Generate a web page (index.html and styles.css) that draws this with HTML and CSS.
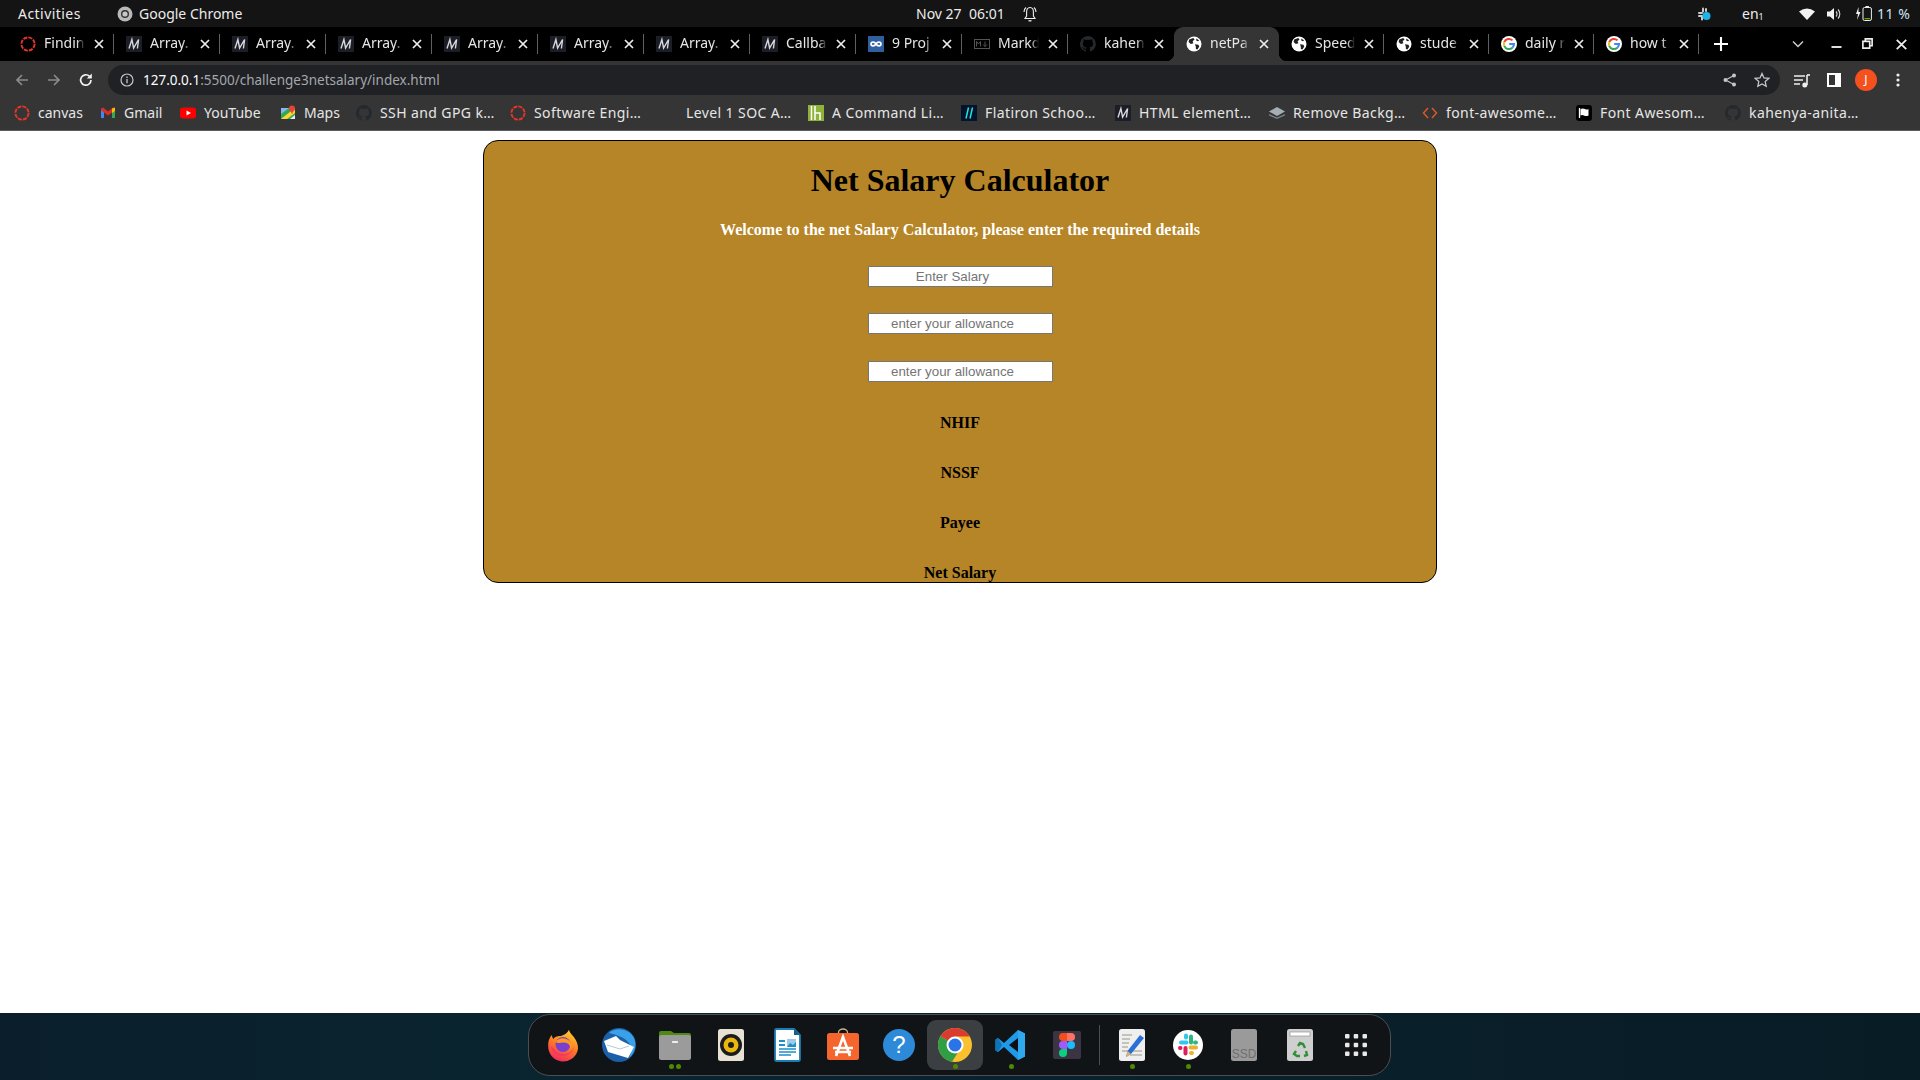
FILE: index.html
```html
<!DOCTYPE html>
<html lang="en">
<head>
<meta charset="utf-8">
<title>netPay</title>
<link rel="stylesheet" href="styles.css">
</head>
<body>
<svg class="defs" width="0" height="0" aria-hidden="true">
  <symbol id="ring" viewBox="0 0 16 16"><circle cx="8" cy="8" r="6.6" fill="none" stroke="#e5352b" stroke-width="1.9" stroke-dasharray="4.2 1"/></symbol>
  <symbol id="mdn" viewBox="0 0 16 16"><rect width="16" height="16" fill="#1b1e27"/><path d="M3 12.500 5.900 3.500 7.600 12 12.600 3.500 11.400 12.500" fill="none" stroke="#d8d8dc" stroke-width="1.400"/></symbol>
  <symbol id="globe" viewBox="0 0 16 16"><circle cx="8" cy="8" r="7.5" fill="#fff"/><path d="M3.2 3.4 7.2 1.9 8.6 3.6 6.6 5.2 7.4 7.3 4.8 8 2.6 6ZM9 8.2l3.4.5.9 1.7-1.8 3L9.900 13 9.800 10.800ZM10.300 2.400l2.900 2-1.300.9-1.700-.9Z" fill="#202124"/></symbol>
  <symbol id="google" viewBox="0 0 16 16"><circle cx="8" cy="8" r="8" fill="#fff"/><path d="M3.2 6.3A5 5 0 0 1 11.500 4.400" fill="none" stroke="#ea4335" stroke-width="2"/><path d="M3.200 9.700A5 5 0 0 1 3.200 6.300" fill="none" stroke="#fbbc05" stroke-width="2"/><path d="M11.400 11.700A5 5 0 0 1 3.200 9.700" fill="none" stroke="#34a853" stroke-width="2"/><path d="M8.200 8H13A5 5 0 0 1 11.400 11.700" fill="none" stroke="#4285f4" stroke-width="2"/></symbol>
  <symbol id="github" viewBox="0 0 16 16"><path d="M8 0a8 8 0 0 0-2.500 15.600c.4.100.5-.2.500-.4v-1.400c-2.200.5-2.700-1-2.700-1-.4-.9-.9-1.200-.9-1.200-.7-.5.100-.5.100-.5.800.1 1.200.8 1.200.8.700 1.200 1.900.9 2.300.7.100-.5.300-.9.500-1.100-1.800-.2-3.600-.9-3.600-4 0-.9.300-1.600.8-2.100-.1-.2-.4-1 .1-2.100 0 0 .7-.2 2.200.8a7.700 7.700 0 0 1 4 0c1.500-1 2.200-.8 2.200-.8.400 1.100.2 1.900.1 2.100.5.600.8 1.300.8 2.100 0 3.100-1.900 3.700-3.700 3.900.3.300.6.800.6 1.500v2.200c0 .2.100.5.600.4A8 8 0 0 0 8 0Z" fill="#24292e"/></symbol>
  <symbol id="close" viewBox="0 0 12 12"><path d="M2 2l8 8M10 2l-8 8" stroke="#eee" stroke-width="1.700" fill="none"/></symbol>
</svg>

<div class="topbar">
  <span class="activities">Activities</span>
  <span class="app-name">
    <svg class="ic16" viewBox="0 0 16 16"><circle cx="8" cy="8" r="7.500" fill="#b9b9b9"/><circle cx="8" cy="8" r="4" fill="#333"/><circle cx="8" cy="8" r="2.600" fill="#c8c8c8"/></svg>
    Google Chrome
  </span>
  <span class="clock">Nov 27&nbsp; 06:01</span>
  <svg class="bell" viewBox="0 0 14 16"><path d="M7 1.500C4.500 1.500 3.600 3.500 3.600 6v4L2 12.500h10L10.400 10V6C10.400 3.500 9.500 1.500 7 1.500ZM1 6Q1 3 3 1.500M13 6Q13 3 11 1.500" fill="none" stroke="#eee" stroke-width="1.100"/><path d="M5.500 14.800h3" stroke="#eee" stroke-width="1.300"/></svg>
  <div class="tray">
    <svg class="tray-slack" viewBox="0 0 14 14"><g fill="#ccc"><rect x="1" y="5" width="5" height="2" rx="1"/><rect x="5" y="0.500" width="2" height="5" rx="1"/><rect x="1" y="8" width="5" height="2" rx="1"/><rect x="4" y="9" width="2" height="4.500" rx="1"/><rect x="8" y="1" width="2" height="4" rx="1"/></g><circle cx="9.500" cy="9" r="4" fill="#1eb4e8"/></svg>
    <span class="lang">en<sub>1</sub></span>
    <svg class="tray-wifi" viewBox="0 0 16 12"><path d="M0 3.500Q8-2.500 16 3.500L8 12Z" fill="#f2f2f2"/></svg>
    <svg class="tray-vol" viewBox="0 0 15 14"><path d="M0 4.500h3L7 1v12L3 9.500H0Z" fill="#f2f2f2"/><path d="M9 4.500a3.500 3.500 0 0 1 0 5M11 2.500a6.500 6.500 0 0 1 0 9" fill="none" stroke="#ddd" stroke-width="1.100"/></svg>
    <svg class="tray-bat" viewBox="0 0 17 15"><path d="M3.500 1 1 8h2L2 14 5.500 6h-2Z" fill="#f2f2f2"/><rect x="8" y="1.500" width="8.400" height="13" rx="1.500" fill="none" stroke="#eee"/><rect x="10.500" y="0" width="3.400" height="1.500" fill="#eee"/><rect x="9.500" y="12" width="5.400" height="1.300" fill="#5fa800"/></svg>
    <span class="pct">11 %</span>
  </div>
</div>

<div class="tabstrip">
  <div class="tab"><svg class="ic16"><use href="#ring"/></svg><span class="tab-title">Findin</span><svg class="tab-x"><use href="#close"/></svg></div>
  <div class="tab"><svg class="ic16"><use href="#mdn"/></svg><span class="tab-title">Array.</span><svg class="tab-x"><use href="#close"/></svg></div>
  <div class="tab"><svg class="ic16"><use href="#mdn"/></svg><span class="tab-title">Array.</span><svg class="tab-x"><use href="#close"/></svg></div>
  <div class="tab"><svg class="ic16"><use href="#mdn"/></svg><span class="tab-title">Array.</span><svg class="tab-x"><use href="#close"/></svg></div>
  <div class="tab"><svg class="ic16"><use href="#mdn"/></svg><span class="tab-title">Array.</span><svg class="tab-x"><use href="#close"/></svg></div>
  <div class="tab"><svg class="ic16"><use href="#mdn"/></svg><span class="tab-title">Array.</span><svg class="tab-x"><use href="#close"/></svg></div>
  <div class="tab"><svg class="ic16"><use href="#mdn"/></svg><span class="tab-title">Array.</span><svg class="tab-x"><use href="#close"/></svg></div>
  <div class="tab"><svg class="ic16"><use href="#mdn"/></svg><span class="tab-title">Callba</span><svg class="tab-x"><use href="#close"/></svg></div>
  <div class="tab"><svg class="ic16" viewBox="0 0 16 16"><rect width="16" height="16" fill="#2f5f9e"/><path d="M8 8C6.500 5.500 3 5.600 3 8s3.500 2.500 5 0 5-2.400 5 0-3.500 2.500-5 0Z" fill="none" stroke="#fff" stroke-width="1.600"/></svg><span class="tab-title">9 Proj</span><svg class="tab-x"><use href="#close"/></svg></div>
  <div class="tab"><svg class="ic16" viewBox="0 0 16 16"><rect x=".5" y="3.500" width="15" height="9" fill="none" stroke="#555"/><path d="M2.500 10.500v-5l2 2.500 2-2.500v5M11 5.500v5M9 8.500l2 2 2-2" fill="none" stroke="#555"/></svg><span class="tab-title">Markd</span><svg class="tab-x"><use href="#close"/></svg></div>
  <div class="tab tab-last"><svg class="ic16"><use href="#github"/></svg><span class="tab-title">kahen</span><svg class="tab-x"><use href="#close"/></svg></div>
  <div class="tab tab-active tab-sm"><svg class="ic16"><use href="#globe"/></svg><span class="tab-title">netPa</span><svg class="tab-x"><use href="#close"/></svg></div>
  <div class="tab tab-sm"><svg class="ic16"><use href="#globe"/></svg><span class="tab-title">Speed</span><svg class="tab-x"><use href="#close"/></svg></div>
  <div class="tab tab-sm"><svg class="ic16"><use href="#globe"/></svg><span class="tab-title">stude</span><svg class="tab-x"><use href="#close"/></svg></div>
  <div class="tab tab-sm"><svg class="ic16"><use href="#google"/></svg><span class="tab-title">daily r</span><svg class="tab-x"><use href="#close"/></svg></div>
  <div class="tab tab-sm"><svg class="ic16"><use href="#google"/></svg><span class="tab-title">how t</span><svg class="tab-x"><use href="#close"/></svg></div>
  <svg class="newtab" viewBox="0 0 12 12"><path d="M6 0v12M0 6h12" stroke="#fff" stroke-width="1.800"/></svg>
  <svg class="tab-chev" viewBox="0 0 12 8"><path d="M1 1.500l5 5 5-5" fill="none" stroke="#ccc" stroke-width="1.500"/></svg>
  <svg class="win-min" viewBox="0 0 10 2"><rect width="10" height="2" fill="#ddd"/></svg>
  <svg class="win-max" viewBox="0 0 10 10"><path d="M3 3V.800h6.200V7H7M.8 3h6.200v6.200H.8Z" fill="none" stroke="#eee" stroke-width="1.500"/></svg>
  <svg class="win-x" viewBox="0 0 10 10"><path d="M.7.700l8.600 8.600M9.300.700L.7 9.300" stroke="#eee" stroke-width="1.600"/></svg>
</div>

<div class="toolbar">
  <svg class="nav nav-back" viewBox="0 0 16 16"><path d="M14 8H3M8 3 3 8l5 5" fill="none" stroke="#8a8b8e" stroke-width="1.700"/></svg>
  <svg class="nav nav-fwd" viewBox="0 0 16 16"><path d="M2 8h11M8 3l5 5-5 5" fill="none" stroke="#8a8b8e" stroke-width="1.700"/></svg>
  <svg class="nav nav-reload" viewBox="0 0 16 16"><path d="M13 8a5.200 5.200 0 1 1-1.500-3.700" fill="none" stroke="#f1f3f4" stroke-width="1.700"/><path d="M13.800 1.500v5h-5Z" fill="#f1f3f4"/></svg>
  <div class="omnibox">
    <svg class="info" viewBox="0 0 14 14"><circle cx="7" cy="7" r="6" fill="none" stroke="#c4c7c9" stroke-width="1.200"/><path d="M7 6v4.300M7 3.500v1.400" stroke="#c4c7c9" stroke-width="1.300"/></svg>
    <span class="url"><span class="host">127.0.0.1</span>:5500/challenge3netsalary/index.html</span>
    <svg class="share" viewBox="0 0 14 14"><circle cx="11" cy="2.500" r="2" fill="#c4c7c9"/><circle cx="11" cy="11.500" r="2" fill="#c4c7c9"/><circle cx="2.500" cy="7" r="2" fill="#c4c7c9"/><path d="M11 2.500 2.500 7l8.500 4.500" fill="none" stroke="#c4c7c9" stroke-width="1.100"/></svg>
    <svg class="star" viewBox="0 0 16 16"><path d="M8 1.500l2 4.400 4.800.5-3.600 3.200 1 4.700L8 11.900l-4.200 2.400 1-4.700L1.200 6.400 6 5.900Z" fill="none" stroke="#c4c7c9" stroke-width="1.300"/></svg>
  </div>
  <svg class="tool tool-media" viewBox="0 0 16 14"><path d="M0 2h11M0 6h9M0 10h6" stroke="#eee" stroke-width="1.500"/><path d="M13 1v10" stroke="#eee" stroke-width="1.600"/><path d="M13 1h3" stroke="#eee" stroke-width="1.600"/><circle cx="10.800" cy="11" r="2.500" fill="#eee"/></svg>
  <svg class="tool tool-side" viewBox="0 0 14 14"><rect x="1" y="1" width="12" height="12" fill="#353535" stroke="#fff" stroke-width="2"/><rect x="8" y="1" width="5" height="12" fill="#fff"/></svg>
  <span class="avatar">J</span>
  <svg class="tool tool-more" viewBox="0 0 4 14"><circle cx="2" cy="2" r="1.600" fill="#eee"/><circle cx="2" cy="7" r="1.600" fill="#eee"/><circle cx="2" cy="12" r="1.600" fill="#eee"/></svg>
</div>

<div class="bookmarks">
  <div class="bm bm-canvas"><svg class="ic16"><use href="#ring"/></svg><span>canvas</span></div>
  <div class="bm bm-gmail"><svg class="ic16" viewBox="0 0 16 16"><path d="M1 3.500v9.500h3V7.500L8 10.500l4-3V13h3V3.500l-2-1-5 4-5-4Z" fill="#d93025"/><path d="M1 5v8h3V7.500Z" fill="#4285f4"/><path d="M15 5v8h-3V7.500Z" fill="#34a853"/><path d="M12 3.500l3-1V6l-3 2Z" fill="#fbbc05"/></svg><span>Gmail</span></div>
  <div class="bm bm-yt"><svg class="ic16" viewBox="0 0 16 16"><rect y="2.500" width="16" height="11" rx="3" fill="#f00"/><path d="M6.500 5.500v5L11 8Z" fill="#fff"/></svg><span>YouTube</span></div>
  <div class="bm bm-maps"><svg class="ic16" viewBox="0 0 16 16"><path d="M1 3h10l4 0v11H1Z" fill="#34a853"/><path d="M1 14 15 3v5L7 14Z" fill="#fdd835"/><path d="M10 14l5-4v4Z" fill="#e8eaed"/><path d="M1 3h8L1 9Z" fill="#8ab4f8"/><circle cx="12" cy="3.500" r="3" fill="#ea4335"/><path d="M10 5l2 4 2-4Z" fill="#ea4335"/></svg><span>Maps</span></div>
  <div class="bm bm-ssh"><svg class="ic16"><use href="#github"/></svg><span>SSH and GPG k…</span></div>
  <div class="bm bm-soft"><svg class="ic16"><use href="#ring"/></svg><span>Software Engi…</span></div>
  <div class="bm bm-soc"><svg class="ic16" viewBox="0 0 16 16"><path d="M13 2.500A7 7 0 0 0 3.500 12.500 7 7 0 0 1 13 2.500Z" fill="#4a4a4a"/></svg><span>Level 1 SOC A…</span></div>
  <div class="bm bm-cmd"><svg class="ic16" viewBox="0 0 16 16"><rect width="16" height="16" fill="#8fb339"/><path d="M3.500 1v14M7 1v14M7 8h5v7" fill="none" stroke="#fff" stroke-width="1.500"/></svg><span>A Command Li…</span></div>
  <div class="bm bm-flat"><svg class="ic16" viewBox="0 0 16 16"><rect width="16" height="16" fill="#04122b"/><path d="M5 13.500 7.500 2.500M9 13.500 11.500 2.500" stroke="#19e6e0" stroke-width="1.500"/></svg><span>Flatiron Schoo…</span></div>
  <div class="bm bm-html"><svg class="ic16"><use href="#mdn"/></svg><span>HTML element…</span></div>
  <div class="bm bm-remove"><svg class="ic16" viewBox="0 0 16 16"><path d="M0 9 8 12.500 16 9v1.500L8 14 0 10.500Z" fill="#78808a"/><path d="M0 6.500 8 2l8 4.500L8 11Z" fill="#a6adb5"/></svg><span>Remove Backg…</span></div>
  <div class="bm bm-fa"><svg class="ic16" viewBox="0 0 16 16"><path d="M6 3 1.500 8 6 13M10 3l4.500 5L10 13" fill="none" stroke="#d8592a" stroke-width="1.500"/></svg><span>font-awesome…</span></div>
  <div class="bm bm-fa2"><svg class="ic16" viewBox="0 0 16 16"><rect width="16" height="16" rx="3" fill="#000"/><path d="M3.500 3v10" stroke="#fff" stroke-width="1.300"/><path d="M4.500 4Q7 3 9 4t3.500 0v6.500Q10 11.500 8 10.500t-3.500 0Z" fill="#fff"/></svg><span>Font Awesom…</span></div>
  <div class="bm"><svg class="ic16"><use href="#github"/></svg><span>kahenya-anita…</span></div>
</div>

<main class="page">
  <section class="card">
    <h1 class="title">Net Salary Calculator</h1>
    <p class="welcome">Welcome to the net Salary Calculator, please enter the required details</p>
    <form class="fields">
      <input class="field" type="number" placeholder="Enter Salary">
      <input class="field" type="number" placeholder="enter your allowance">
      <input class="field" type="number" placeholder="enter your allowance">
    </form>
    <div class="results">
      <p class="result">NHIF</p>
      <p class="result">NSSF</p>
      <p class="result">Payee</p>
      <p class="result">Net Salary</p>
    </div>
  </section>
</main>

<footer class="desktop">
  <nav class="dock">
    <div class="app"><svg class="app-ic" viewBox="0 0 36 36"><defs><linearGradient id="ff" x1="0.700" y1="0" x2="0.300" y2="1"><stop offset="0" stop-color="#ffcf2a"/><stop offset=".5" stop-color="#ff7a26"/><stop offset="1" stop-color="#f0285f"/></linearGradient></defs><path d="M24 2.500c.5 4 4 5.500 6.500 10 2.500 4.500 3 8 2 11.500A15 15 0 0 1 3.200 19C3 14 5 9.500 7 8c0 2 .6 3.200 1.500 4C10 9 14 9 16 9c3-1 7-3 8-6.500Z" fill="url(#ff)"/><circle cx="18" cy="17.500" r="7.500" fill="#7a3fd1"/><path d="M10.500 15c3-4 9-5.500 14-1 3 3 2.500 7 1 9 .5-5-3-8-7.500-7.500-3 .3-5 1-7.500-.5Z" fill="#ff9a1f"/><path d="M6 19c1 8 7 11 13 10 5-1 9-4 10-9-2 5-6 7-10 7-5 0-9-3-13-8Z" fill="#f43b5c"/></svg></div>
    <div class="app"><svg class="app-ic" viewBox="0 0 36 36"><circle cx="18" cy="18" r="17" fill="#1c5fa8"/><path d="M8 6C14 0 28 1 33 11c3 7 1 15-5 20 3-6 3-12-1-16-4-5-11-7-19-9Z" fill="#3aa0e8"/><path d="M3 14 15 9 19 13 33 20 27 31 7 25Z" fill="#fff"/><path d="M6 18 19 22 28 19" fill="none" stroke="#b8c8d8" stroke-width="1"/></svg></div>
    <div class="app"><svg class="app-ic" viewBox="0 0 36 36"><path d="M2 6a2 2 0 0 1 2-2h10l3 2h15a2 2 0 0 1 2 2v6H2Z" fill="#4f8a10"/><rect x="2" y="8" width="32" height="25" rx="2.500" fill="#9b9b9b"/><rect x="15" y="14" width="6" height="2" rx=".5" fill="#eee"/></svg><span class="dots"><i></i><i></i></span></div>
    <div class="app"><svg class="app-ic" viewBox="0 0 36 36"><rect x="5" y="2" width="26" height="32" rx="2.500" fill="#e7e2d4"/><circle cx="18" cy="18" r="11" fill="#1c1c1c"/><circle cx="18" cy="18" r="7.500" fill="#eab70f"/><circle cx="18" cy="18" r="3" fill="#1c1c1c"/></svg></div>
    <div class="app"><svg class="app-ic" viewBox="0 0 36 36"><path d="M6 3.500a1.500 1.500 0 0 1 1.500-1.500H25l6 6v24.500a1.500 1.500 0 0 1-1.500 1.500h-22A1.500 1.500 0 0 1 6 32.500Z" fill="#fff" stroke="#1a7cb0" stroke-width="1.800"/><path d="M25 2l6 6h-6Z" fill="#14618c"/><rect x="10" y="13" width="6" height="2" fill="#1f8fca"/><rect x="10" y="17" width="6" height="2" fill="#1f8fca"/><rect x="18" y="12" width="9" height="8" fill="#9ccbe6"/><path d="M18 20l3-4 3 2 3-3v5Z" fill="#1f8fca"/><path d="M10 22h17M10 25h17M10 28h12" stroke="#1f8fca" stroke-width="1.500"/></svg></div>
    <div class="app"><svg class="app-ic" viewBox="0 0 36 36"><path d="M13.500 7V5.500a4.500 3.500 0 0 1 9 0V7" fill="none" stroke="#c8b48e" stroke-width="1.300"/><rect x="2" y="6" width="32" height="27" rx="2.500" fill="#f4662e"/><path d="M11 29 18 10l7 19M8 21h20M10 25h16" fill="none" stroke="#fff" stroke-width="2.600"/></svg></div>
    <div class="app"><svg class="app-ic" viewBox="0 0 36 36"><circle cx="18" cy="18" r="16" fill="#2c8ad8"/><text class="help-q" x="18" y="26" text-anchor="middle">?</text></svg></div>
    <div class="app app-active"><svg class="app-ic" viewBox="0 0 36 36"><circle cx="18" cy="18" r="17" fill="#fbc02d"/><path d="M18 18 3.500 9.200A17 17 0 0 1 32.700 9.500H18Z" fill="#db3a2e"/><path d="M18 18 3.500 9.200A17 17 0 0 0 15 34.800l7-11Z" fill="#2f9e44"/><circle cx="18" cy="18" r="8.500" fill="#fff"/><circle cx="18" cy="18" r="6.500" fill="#2a73e8"/></svg><span class="dots"><i></i></span></div>
    <div class="app"><svg class="app-ic" viewBox="0 0 36 36"><path d="M25 3 32 6.500V29.500L25 33 11 20 5 25 2.500 23.500V12.500L5 11l6 5Z" fill="#1f9ae8"/><path d="M25 3V33L32 29.500V6.500Z" fill="#2fa8f0"/><path d="M25 11v14l-9-7Z" fill="#0d0f12"/><path d="M5 11 2.500 12.500V23.500L5 25l4-7Z" fill="#0f73b8"/></svg><span class="dots"><i></i></span></div>
    <div class="app"><svg class="app-ic" viewBox="0 0 36 36"><rect x="4" y="4" width="28" height="28" rx="2" fill="#3b3543"/><path d="M18 6h-4a4 4 0 0 0 0 8h4Z" fill="#f24e1e"/><path d="M18 6h4a4 4 0 0 1 0 8h-4Z" fill="#ff7262"/><path d="M18 14h-4a4 4 0 0 0 0 8h4Z" fill="#a259ff"/><circle cx="22" cy="18" r="4" fill="#1abcfe"/><path d="M14 22h4v4a4 4 0 1 1-4-4Z" fill="#0acf83"/></svg></div>
    <span class="dock-sep"></span>
    <div class="app"><svg class="app-ic" viewBox="0 0 36 36"><rect x="5" y="2" width="26" height="32" rx="2.500" fill="#efefef"/><path d="M8 8h10M8 12h8M8 16h7M8 20h6M8 24h20M16 28h12" stroke="#b5b5a8" stroke-width="1.500"/><path d="M26 8l4 3-13 16-5 3 1.500-6Z" fill="#2a6fd6"/><path d="M12 30l1.500-6 3.500 3Z" fill="#e0b070"/></svg><span class="dots"><i></i></span></div>
    <div class="app"><svg class="app-ic" viewBox="0 0 36 36"><circle cx="18" cy="18" r="15" fill="#fff"/><g fill="none" stroke-width="4" stroke-linecap="round"><path d="M11 15.500h5.500" stroke="#36c5f0"/><path d="M16 8.500v2" stroke="#36c5f0"/><path d="M21 9.500v6" stroke="#2eb67d"/><path d="M26 15.500h-1" stroke="#2eb67d"/><path d="M20.500 20.500H26" stroke="#ecb22e"/><path d="M21 26h1" stroke="#ecb22e"/><path d="M15.500 21v5.500" stroke="#e01e5a"/><path d="M10 21h.5" stroke="#e01e5a"/></g></svg><span class="dots"><i></i></span></div>
    <div class="app"><svg class="app-ic" viewBox="0 0 36 36"><rect x="5" y="2" width="26" height="32" rx="2.500" fill="#9a9a9a"/><text class="ssd" x="18" y="31" text-anchor="middle">SSD</text></svg></div>
    <div class="app"><svg class="app-ic" viewBox="0 0 36 36"><rect x="5" y="2" width="26" height="32" rx="2.500" fill="#cfcfcf"/><rect x="8" y="5" width="20" height="4" fill="#fff" stroke="#888" stroke-width=".6"/><path d="M14 24l-2 3 3 2h3M22 29l3-1-1-4M16 19l2-3 3 1 2 4" fill="none" stroke="#2f8f3a" stroke-width="2.400"/></svg></div>
    <div class="app"><svg class="app-ic" viewBox="0 0 36 36"><g fill="#e8e8e8"><rect x="7" y="7" width="4.500" height="4.500" rx="1"/><rect x="15.700" y="7" width="4.500" height="4.500" rx="1"/><rect x="24.500" y="7" width="4.500" height="4.500" rx="1"/><rect x="7" y="15.700" width="4.500" height="4.500" rx="1"/><rect x="15.700" y="15.700" width="4.500" height="4.500" rx="1"/><rect x="24.500" y="15.700" width="4.500" height="4.500" rx="1"/><rect x="7" y="24.500" width="4.500" height="4.500" rx="1"/><rect x="15.700" y="24.500" width="4.500" height="4.500" rx="1"/><rect x="24.500" y="24.500" width="4.500" height="4.500" rx="1"/></g></svg></div>
  </nav>
</footer>
</body>
</html>
```
FILE: styles.css
```css
* { box-sizing: border-box; }
html, body { height: 100%; }
body {
  margin: 0;
  height: 1080px;
  overflow: hidden;
  display: flex;
  flex-direction: column;
  background: #fff;
  font-family: "Noto Sans", "Roboto", sans-serif;
}
.defs { position: absolute; }
.ic16 { width: 16px; height: 16px; flex: none; }

/* GNOME top bar */
.topbar {
  height: 27px;
  flex: none;
  display: flex;
  align-items: center;
  padding-left: 18px;
  background: #141414;
  color: #ececec;
  font-size: 14px;
}
.activities { width: 99px; flex: none; letter-spacing: .45px; }
.app-name { width: 800px; flex: none; display: flex; align-items: center; gap: 6px; }
.clock { width: 106px; flex: none; font-size: 14px; margin-left: -1px; margin-right: 1px; }
.bell { width: 14px; height: 16px; flex: none; }
.tray { margin-left: auto; display: flex; align-items: center; padding-right: 13px; }
.tray-slack { width: 14px; height: 14px; margin-right: 31px; }
.lang { width: 57px; font-size: 14px; }
.lang sub { font-size: 9px; vertical-align: -1px; }
.tray-wifi { width: 16px; height: 12px; margin-right: 12px; }
.tray-vol { width: 15px; height: 14px; margin-right: 13px; }
.tray-bat { width: 17px; height: 15px; margin-right: 5px; }
.pct { width: 30px; color: #cfe3f2; font-size: 14px; letter-spacing: .5px; white-space: nowrap; }

/* Tab strip */
.tabstrip {
  height: 34px;
  flex: none;
  display: flex;
  align-items: center;
  padding-left: 8px;
  background: #000;
  color: #e6e6e6;
  font-size: 14px;
}
.tab {
  position: relative;
  width: 106px;
  height: 34px;
  flex: none;
  display: flex;
  align-items: center;
  gap: 8px;
  padding: 0 9px 0 12px;
}
.tab-sm { width: 105px; }
.tab::after {
  content: "";
  position: absolute;
  right: 0;
  top: 7px;
  width: 1px;
  height: 20px;
  background: #5f6063;
}
.tab-last::after { display: none; }
.tab-active {
  background: #353535;
  border-radius: 9px 9px 0 0;
}
.tab-active::before,
.tab-active::after {
  content: "";
  display: block;
  position: absolute;
  top: auto;
  bottom: 0;
  width: 8px;
  height: 8px;
}
.tab-active::before { left: -8px; background: radial-gradient(circle at 0 0, transparent 8px, #353535 8.5px); }
.tab-active::after { right: -8px; background: radial-gradient(circle at 100% 0, transparent 8px, #353535 8.5px); }
.tab-title {
  flex: 1;
  min-width: 0;
  overflow: hidden;
  white-space: nowrap;
  line-height: 20px;
  padding-bottom: 2px;
  -webkit-mask-image: linear-gradient(to right, #000 80%, transparent);
  mask-image: linear-gradient(to right, #000 80%, transparent);
}
.tab-x { width: 12px; height: 12px; flex: none; }
.newtab { width: 14px; height: 14px; flex: none; margin-left: 15px; }
.tab-chev { width: 12px; height: 8px; flex: none; margin-left: 64px; }
.win-min { width: 11px; height: 2px; flex: none; margin: 6px 0 0 26.500px; }
.win-max { width: 11px; height: 11px; flex: none; margin: -2px 0 0 20.500px; }
.win-x { width: 11px; height: 11px; flex: none; margin-left: 22.500px; }

/* Toolbar */
.toolbar {
  height: 34px;
  flex: none;
  display: flex;
  align-items: flex-start;
  background: #353535;
}
.nav { width: 16px; height: 16px; flex: none; margin-top: 11px; }
.nav-back { margin-left: 14px; }
.nav-fwd { margin-left: 16px; }
.nav-reload { margin-left: 16px; }
.omnibox {
  width: 1672px;
  height: 30px;
  flex: none;
  margin: 4px 0 0 14px;
  display: flex;
  align-items: center;
  padding: 0 10px 0 35px;
  position: relative;
  background: #202124;
  border-radius: 15px;
  color: #a4a7ab;
  font-size: 13.500px;
}
.info { position: absolute; left: 12px; top: 8px; width: 14px; height: 14px; }
.url { flex: 1; }
.host { color: #fff; }
.share { width: 14px; height: 14px; margin-right: 17px; }
.star { width: 16px; height: 16px; }
.tool { flex: none; }
.tool-media { width: 16px; height: 14px; margin: 13px 0 0 14px; }
.tool-side { width: 14px; height: 14px; margin: 12px 0 0 17px; }
.avatar {
  width: 22px;
  height: 22px;
  flex: none;
  margin: 8px 0 0 14px;
  border-radius: 50%;
  background: #f4511e;
  color: #fff;
  font-size: 12px;
  line-height: 22px;
  text-align: center;
}
.tool-more { width: 4px; height: 14px; margin: 12px 0 0 19px; }

/* Bookmarks */
.bookmarks {
  height: 36px;
  flex: none;
  display: flex;
  align-items: center;
  padding-left: 14px;
  background: #353535;
  border-bottom: 1px solid #5c5c5c;
  color: #e6e6e6;
  font-size: 14px;
}
.bm { flex: none; display: flex; align-items: center; gap: 8px; white-space: nowrap; }
.bm:nth-child(n+5) span { letter-spacing: .4px; }
.bm-canvas { width: 86px; }
.bm-gmail { width: 80px; }
.bm-yt { width: 100px; }
.bm-maps { width: 76px; }
.bm-ssh { width: 154px; }
.bm-soft { width: 154px; }
.bm-soc { width: 144px; gap: 6px; }
.bm-cmd { width: 153px; }
.bm-flat { width: 154px; }
.bm-html { width: 154px; }
.bm-remove { width: 153px; }
.bm-fa { width: 154px; }
.bm-fa2 { width: 149px; }

/* Page */
.page { flex: 1; min-height: 0; background: #fff; padding-top: 9px; }
.card {
  width: 954px;
  height: 443px;
  margin: 0 auto;
  display: flex;
  flex-direction: column;
  align-items: center;
  background: #b68527;
  border: 1px solid #000;
  border-radius: 15px;
  font-family: "Liberation Serif", serif;
  color: #000;
}
.title { margin: 21.440px 0; font-size: 32px; font-weight: 700; }
.welcome { margin: 0; font-size: 16px; font-weight: 700; color: #fff; }
.fields {
  display: flex;
  flex-direction: column;
  gap: 26.500px;
  margin-top: 27px;
}
.field {
  width: 185px;
  height: 21px;
  padding: 1px 2px;
  border: 1px solid #767676;
  background: #fff;
  text-align: center;
  font-family: "Liberation Sans", sans-serif;
  font-size: 13.333px;
}
.field::placeholder { color: #757575; }
.results { display: flex; flex-direction: column; align-items: center; gap: 32px; margin-top: 32px; }
.result { margin: 0; font-size: 16px; font-weight: 700; }

/* Dock */
.desktop {
  height: 67px;
  flex: none;
  display: flex;
  justify-content: center;
  align-items: flex-start;
  padding: 1px 1px 0 0;
  background: linear-gradient(90deg, #0a1f2b 0%, #0a2530 30%, #091f2a 70%, #081c26 100%);
}
.dock {
  width: 863px;
  height: 62px;
  display: flex;
  align-items: center;
  padding-left: 6px;
  background: #111417;
  border: 1px solid #4c4f52;
  border-radius: 22px;
}
.app {
  position: relative;
  width: 56px;
  height: 50px;
  flex: none;
  display: flex;
  align-items: center;
  justify-content: center;
  border-radius: 9px;
}
.app-active { background: #3c3f42; }
.app-ic { width: 36px; height: 36px; }
.dots {
  position: absolute;
  left: 0;
  right: 0;
  bottom: 1px;
  display: flex;
  justify-content: center;
  gap: 2px;
}
.dots i { width: 5px; height: 5px; border-radius: 50%; background: #4e8a00; }
.dock-sep { width: 9px; height: 40px; flex: none; display: flex; justify-content: center; }
.dock-sep::before { content: ""; width: 1px; background: #4c4f52; }
.help-q { font: 400 24px "Liberation Sans", sans-serif; fill: #fff; }
.ssd { font: 400 12px "Liberation Sans", sans-serif; fill: #6f6f6f; }
```
